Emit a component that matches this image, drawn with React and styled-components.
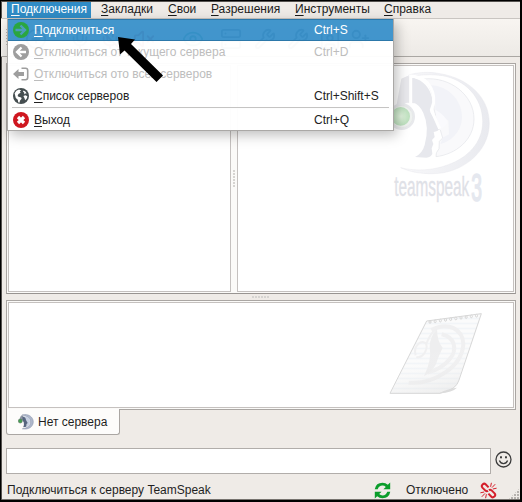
import React from "react";
import styled, { createGlobalStyle } from "styled-components";
import { Mic, MicOff, VolumeX, Eye, Server, Wrench, CirclePlus, UserPlus, Contact } from "lucide-react";

const GlobalStyle = createGlobalStyle`
  * { box-sizing: border-box; }
  body { margin: 0; background: #000; font: 12px "Liberation Sans", Arial, sans-serif; color: #1f1f1f; }
  svg { display: block; flex: none; }
`;

const Window = styled.div`
  position: relative;
  width: 522px;
  height: 502px;
  display: flex;
  flex-direction: column;
  background: #efebe7;
  border: solid #000;
  border-width: 1px 2px 2px 1px;
  box-shadow: inset 1px 1px 0 #55524f, inset 0 -1px 0 #77736f;
  overflow: hidden;
  & > * { flex-shrink: 0; }
`;
const MenuBar = styled.nav`
  display: flex;
  height: 18px;
  padding: 1px 0 0 6px;
  border-bottom: 1px solid #c9c5c1;
`;
const MenuTitle = styled.span`
  width: ${(p) => p.$width}px;
  margin-right: ${(p) => p.$gap || 0}px;
  height: 16px;
  padding-left: 4px;
  line-height: 15px;
  white-space: nowrap;
  color: ${(p) => (p.$active ? "#fff" : "#1b1b1b")};
  background: ${(p) => (p.$active ? "#308cc6" : "transparent")};
`;
const Mnemonic = styled.span`
  text-decoration: underline;
  text-decoration-thickness: 1px;
  text-underline-offset: 2px;
`;
const ToolBar = styled.div`
  display: flex;
  align-items: center;
  height: 38px;
  padding-left: 5px;
  background: linear-gradient(#f8f5f1, #edeae6);
  border-bottom: 1px solid #aaa7a3;
`;
const ToolBarHandle = styled.div`
  width: 2px;
  height: 17px;
  margin-right: 17px;
  background: repeating-linear-gradient(180deg, #bbb8b4 0 1px, transparent 1px 3px);
`;
const Tool = styled.span`
  width: ${(p) => p.$width}px;
  padding-top: 3px;
  opacity: 0.75;
  color: ${(p) => p.$color || "#55606a"};
`;
const Panes = styled.div`
  display: flex;
  height: 231px;
  margin: 6px 4px 0 5px;
  border: 1px solid #aaa6a3;
  border-bottom: 1px solid #989491;
  background: #fbfaf8;
  padding: 1px;
`;
const Pane = styled.div`
  display: flex;
  justify-content: flex-end;
  ${(p) => (p.$width ? `width: ${p.$width}px;` : "flex: 1;")}
  padding: 4px 11px 0 0;
  background: #fff;
  border: 1px solid #c5c1bf;
`;
const Splitter = styled.div`
  display: flex;
  align-items: center;
  justify-content: center;
  width: ${(p) => (p.$horizontal ? "auto" : "6px")};
  height: ${(p) => (p.$horizontal ? "6px" : "auto")};
`;
const Grip = styled.div`
  width: ${(p) => (p.$horizontal ? 18 : 2)}px;
  height: ${(p) => (p.$horizontal ? 2 : 17)}px;
  background: repeating-linear-gradient(${(p) => (p.$horizontal ? "90deg" : "180deg")}, #d6d4d1 0 2px, transparent 2px 3px);
`;
const ChatFrame = styled.div`
  display: flex;
  height: 110px;
  margin: 0 4px 0 5px;
  padding: 1px;
  border: 1px solid #aaa6a3;
  background: #fbfaf8;
`;
const ChatView = styled.div`
  flex: 1;
  display: flex;
  justify-content: flex-end;
  padding: 7px 29px 0 0;
  background: #fff;
  border: 1px solid #c5c1bf;
`;
const Tab = styled.div`
  display: flex;
  align-items: center;
  gap: 4px;
  width: 114px;
  height: 26px;
  margin: -1px 0 0 5px;
  padding-left: 11px;
  white-space: nowrap;
  background: #fdfcfb;
  border: 1px solid #aaa6a3;
  border-top: 0;
  border-radius: 0 0 3px 3px;
`;
const InputRow = styled.div`
  display: flex;
  align-items: flex-start;
  gap: 4px;
  margin: 13px 0 0 5px;
`;
const ChatInput = styled.div`
  width: 485px;
  height: 26px;
  background: #fff;
  border: 1px solid #b1adaa;
`;
const EmoteButton = styled.span`
  padding-top: 3px;
`;
const StatusBar = styled.footer`
  display: flex;
  align-items: center;
  height: 26px;
  padding: 6px 0 0 6px;
`;
const StatusText = styled.span`
  width: ${(p) => p.$width}px;
  padding-left: ${(p) => p.$indent || 0}px;
  white-space: nowrap;
`;
const StatusIcon = styled.span`
  margin-left: 14px;
`;
const SizeGrip = styled.div`
  align-self: flex-end;
  width: 12px;
  height: 12px;
  margin-left: 11px;
  clip-path: polygon(100% 0, 100% 100%, 0 100%);
  background: radial-gradient(circle at 1px 1px, #b4b0ac 0 0.7px, transparent 0.9px) 0 0 / 3px 3px;
`;
const Popup = styled.div`
  position: absolute;
  left: 6px;
  top: 18px;
  width: 387px;
  height: 112px;
  border: 1px solid #aaa8a6;
  border-top: 0;
  box-shadow: 3px 4px 12px rgba(0, 0, 0, 0.26);
`;
const MenuRow = styled.div`
  display: grid;
  grid-template-columns: 21px 280px 1fr;
  align-items: center;
  height: ${(p) => (p.$last ? 21 : 22)}px;
  padding-left: 5px;
  white-space: nowrap;
  color: ${(p) => (p.$disabled ? "#bdbdbd" : p.$active ? "#fff" : "#222")};
  background: ${(p) => (p.$active ? "rgba(52,142,201,.93)" : "rgba(255,255,255,.965)")};
  box-shadow: ${(p) => (p.$active ? "inset 0 1px #2c78aa, inset 0 -1px #2c78aa" : "none")};
`;
const Separator = styled.div`
  height: 2px;
  padding: 0 4px 1px;
  background: #fdfdfd;
  &::before { content: ""; display: block; height: 1px; background: #c5c4c3; }
`;
const PointerArrow = styled.svg`
  position: absolute;
  left: 116px;
  top: 34px;
`;

const Label = ({ children }) => (
  <span><Mnemonic>{children[0]}</Mnemonic>{children.slice(1)}</span>
);

function RoundIcon({ kind }) {
  const color = { connect: "#2aa63f", disconnect: "#9e9e9e", globe: "#454e50", quit: "#cf1720" }[kind];
  return (
    <svg width="16" height="16" viewBox="0 0 16 16" fill="none">
      <circle cx="8" cy="8" r="8" fill={color} />
      {kind === "connect" && <path d="M2.5 8h9M7.5 3.5 12 8l-4.5 4.5" stroke="#4c9dbb" strokeWidth="2.4" />}
      {kind === "disconnect" && <path d="M13 8H4.5M8.5 3.5 4 8l4.5 4.5" stroke="#fff" strokeWidth="2.3" />}
      {kind === "quit" && <path d="m5 5 6 6m0-6-6 6" stroke="#fff" strokeWidth="3.2" />}
      {kind === "globe" && (
        <path fill="#fff" d="M1.6 5.2 3.4 2.8 6 1.6l2.2.8-1.4 1.2.8 1.2-2.2 1.1L4.6 8l1 .8 2.6.6.4 1.4-1.5 1.6-.7 2.4-1.2-.5-.4-2.6-2-1.8ZM10.6 2.4l2 1.3 1 1.8-1.7-.1-.9 1 .2-1.8-1.2-.9ZM10.4 8l2-.7 2 .9-.6 2.4-1.6 1.6-.8-2.2Z" />
      )}
    </svg>
  );
}

const LeaveIcon = () => (
  <svg width="16" height="16" viewBox="0 0 16 16" fill="#9e9e9e">
    <path d="M0 8 5.5 3v3H11v4H5.5v3Z" />
    <path d="M8.5 2.2h4q2.2 0 2.2 2.2v7.2q0 2.2-2.2 2.2h-4" fill="none" stroke="#9e9e9e" strokeWidth="1.6" />
  </svg>
);

const TeamLogo = () => (
  <svg width="112" height="150" viewBox="30 30 336 450">
    <defs>
      <linearGradient id="rim" x1="0" x2="1"><stop offset="0" stopColor="#f8f8fa" /><stop offset="1" stopColor="#e9eaef" /></linearGradient>
      <radialGradient id="lamp"><stop offset="0" stopColor="#e2f5df" /><stop offset="1" stopColor="#bce0bd" /></radialGradient>
    </defs>
    <path d="M86 45C112 37 147 34 180 41C266 55 328 112 328 190C328 280 241 341 160 341C121 342 88 335 62 323C105 334 159 332 205 314C263 293 308 248 308 185C308 112 254 58 187 47C154 42 119 44 86 51Z" fill="url(#rim)" stroke="#e1e2e7" />
    <path d="M132 57C210 49 282 105 282 177C282 239 228 283 168 290Q166 279 177 266L178 244L188 234L181 210L171 200L168 171L162 147Q164 94 132 57Z" fill="#f9f9fb" stroke="#e3e4e9" strokeWidth="2" />
    <path d="M153 76C204 78 246 120 246 171C246 213 214 244 181 252L188 233L207 223L205 182L166 150Q167 105 153 76Z" fill="#f2f3f8" />
    <path d="M167 150Q197 166 203 190L181 210L171 198Z" fill="#fafafd" />
    <path d="M82 48 64 56 48 144 81 128 104 130V53Z" fill="#e9e9ed" />
    <path d="M99 53C130 61 151 83 157 118C162 132 153 143 151 157Q166 180 178 207Q174 214 161 216L164 231L156 240L160 252L155 265L157 281Q153 291 139 293L105 291Q127 281 134 255Q149 201 130 159Q120 135 99 127Z" fill="#e7e8ed" />
    <path d="M92 130V48Q124 50 142 68C160 90 163 110 161 128L154 150L179 206" fill="none" stroke="#fff" strokeWidth="9" />
    <circle cx="65" cy="170" r="40" fill="#e8e9ec" />
    <circle cx="65" cy="170" r="33" fill="#eff2f0" stroke="#dfe1df" />
    <circle cx="62" cy="169" r="28" fill="url(#lamp)" />
    <g fontFamily="Liberation Sans">
      <text transform="translate(43 408) scale(.56 1)" fontSize="82" fill="#dfe1e7" stroke="#dfe1e7" strokeWidth="1">teamspeak</text>
      <text transform="translate(274 422) scale(.49 1)" fontSize="118" fill="#e5e8ef" stroke="#e5e8ef" strokeWidth="5">3</text>
    </g>
  </svg>
);

const Notebook = () => (
  <svg width="96" height="88" viewBox="24 90 288 264">
    <defs>
      <pattern id="lines" width="20" height="15" patternUnits="userSpaceOnUse"><rect width="20" height="15" fill="#fbfbfb" /><rect y="8" width="20" height="5" fill="#f2f5f8" /></pattern>
      <linearGradient id="curl" x1=".7" y1="0" x2="1" y2="1"><stop offset=".35" stopColor="#fff" stopOpacity="0" /><stop offset=".9" stopColor="#d8d8d8" /></linearGradient>
    </defs>
    <path d="M140 123 304 101 237 300Q230 329 180 340H30Z" fill="url(#lines)" stroke="#d7d7d7" strokeWidth="3" />
    <g fill="none" stroke="#f0f0f1" strokeWidth="12">
      <path d="M154 150C205 123 249 148 250 193C246 260 162 314 86 308" />
      <path d="M185 163C229 172 230 213 210 236C192 259 168 271 142 278" />
      <path d="M107 226C98 197 128 173 139 193C143 211 127 236 109 231M139 191Q152 158 168 148" strokeWidth="6" />
    </g>
    <path d="M171 148Q172 187 188 203L174 235Q167 269 132 289Q156 238 149 202Q149 169 171 148Z" fill="#eeeeef" />
    <path d="M140 123 304 101 237 300Q230 329 180 340H30Z" fill="url(#curl)" opacity=".4" />
    <path d="M178 340Q200 326 231 323Q218 337 178 340" fill="#dcdcdc" />
    <g stroke="#d5d5d5" strokeWidth="3" fill="#fff">
      {Array.from({ length: 10 }, (_, i) => <ellipse key={i} cx={150 + i * 15.5} cy={126 - i * 2.1} rx="3" ry="4" />)}
    </g>
  </svg>
);

const TabLogo = () => (
  <svg width="16" height="16" viewBox="0 0 16 16">
    <path d="M4 1C10-1 15.5 3 15.3 8c-.2 5-5 8-11 6.8C9 14 12.5 11.5 12.5 8S9 2 4 1Z" fill="#adb6ca" stroke="#8791a8" strokeWidth=".5" />
    <path d="M6 2q6 1 6 5.5T7 13q2-2 1.7-5L6 2Z" fill="#c7d0e2" />
    <path d="M4 2q4 1 4 4l1.7 3-1.1 1-.4 2.8-3 .4Q7.5 8 3 5Z" fill="#57657f" />
    <path d="M1.5 6Q2 1.5 4.5 1v5Z" fill="#8d94a2" />
    <circle cx="2.3" cy="7" r="2" fill="#43a052" stroke="#607562" strokeWidth=".6" />
  </svg>
);

const Smile = () => (
  <svg width="17" height="17" viewBox="0 0 17 17" fill="none" stroke="#3c3c3c" strokeWidth="1.3">
    <circle cx="8.5" cy="8.5" r="7.5" /><path d="M4.4 9.6q1.2 3.1 4.1 3.1t4.1-3.1" />
    <ellipse cx="6" cy="6.2" rx=".9" ry="1.3" fill="#333" stroke="none" /><ellipse cx="11" cy="6.2" rx=".9" ry="1.3" fill="#333" stroke="none" />
  </svg>
);

const Refresh = () => (
  <svg width="17" height="17" viewBox="0 0 17 17" fill="#0b9d2b">
    <path d="M.7 7.2Q2 .8 8.5.8q3.2 0 5.3 2L16.2.6v6.7H9.4l2.4-2.4Q10.5 3.6 8.4 3.6q-3.4 0-4.7 3.6Z" />
    <path d="M16.3 9.8q-1.3 6.4-7.8 6.4-3.2 0-5.3-2L.8 16.4V9.7h6.8l-2.4 2.4q1.3 1.3 3.4 1.3 3.4 0 4.7-3.6Z" />
  </svg>
);

const BrokenLink = () => (
  <svg width="17" height="17" viewBox="0 0 17 17" fill="none" stroke="#d5202c">
    <path strokeWidth="2" d="M8.6 5.4 5.6 2.2Q4.2.9 2.6 2.4T2.4 5.6l3 3q1.3 1.1 2.7.3M8.4 11.6l3 3.2q1.4 1.3 3-.2t.2-3.2l-3-3q-1.3-1.1-2.7-.3" />
    <path d="m10.6 4.8.8-4M12 5.6l3.2-3.4M12.8 7l3.8-.8M6.4 12.2l-.8 4M5 11.4l-3.2 3.4M4.2 10l-3.8.8" strokeWidth="1" />
  </svg>
);

const menuTitles = [
  ["Подключения", 84, 6], ["Закладки", 67], ["Свои", 43],
  ["Разрешения", 84], ["Инструменты", 89], ["Справка", 60],
];
const menuItems = [
  ["Подключиться", "Ctrl+S", <RoundIcon kind="connect" />, { $active: true }],
  ["Отключиться от текущего сервера", "Ctrl+D", <RoundIcon kind="disconnect" />, { $disabled: true }],
  ["Отключиться ото всех серверов", "", <LeaveIcon />, { $disabled: true }],
  ["Список серверов", "Ctrl+Shift+S", <RoundIcon kind="globe" />, {}],
  ["Выход", "Ctrl+Q", <RoundIcon kind="quit" />, { $last: true }],
];
const tools = [
  [CirclePlus, 44], [Mic, 30], [MicOff, 34, "#bd3542"], [VolumeX, 49, "#bd3542"],
  [Eye, 38, "#168876"], [Server, 34], [Wrench, 33], [Wrench, 32], [Contact, 29], [UserPlus, 30],
];

export default function App() {
  return (
    <>
      <GlobalStyle />
      <Window>
        <MenuBar>
          {menuTitles.map(([title, width, gap], i) => (
            <MenuTitle key={title} $width={width} $gap={gap} $active={i === 0}><Label>{title}</Label></MenuTitle>
          ))}
        </MenuBar>
        <ToolBar>
          <ToolBarHandle />
          {tools.map(([Icon, width, color], i) => <Tool key={i} $width={width} $color={color}><Icon size={22} /></Tool>)}
        </ToolBar>
        <Panes>
          <Pane $width={223} />
          <Splitter><Grip /></Splitter>
          <Pane><TeamLogo /></Pane>
        </Panes>
        <Splitter $horizontal><Grip $horizontal /></Splitter>
        <ChatFrame><ChatView><Notebook /></ChatView></ChatFrame>
        <Tab><TabLogo /><span>Нет сервера</span></Tab>
        <InputRow><ChatInput /><EmoteButton><Smile /></EmoteButton></InputRow>
        <StatusBar>
          <StatusText $width={367}>Подключиться к серверу TeamSpeak</StatusText>
          <Refresh />
          <StatusText $width={75} $indent={15}>Отключено</StatusText>
          <StatusIcon><BrokenLink /></StatusIcon>
          <SizeGrip />
        </StatusBar>
        <Popup>
          {menuItems.map(([label, shortcut, icon, state], i) => (
            <React.Fragment key={label}>
              {i === 4 && <Separator />}
              <MenuRow {...state}>{icon}<Label>{label}</Label><span>{shortcut}</span></MenuRow>
            </React.Fragment>
          ))}
        </Popup>
        <PointerArrow width="48" height="50" viewBox="0 0 48 50">
          <path d="M1 2 18 4.5 14 9 46 40.5 39.5 47 7.5 15.5 3 19.5Z" fill="#000" />
        </PointerArrow>
      </Window>
    </>
  );
}
